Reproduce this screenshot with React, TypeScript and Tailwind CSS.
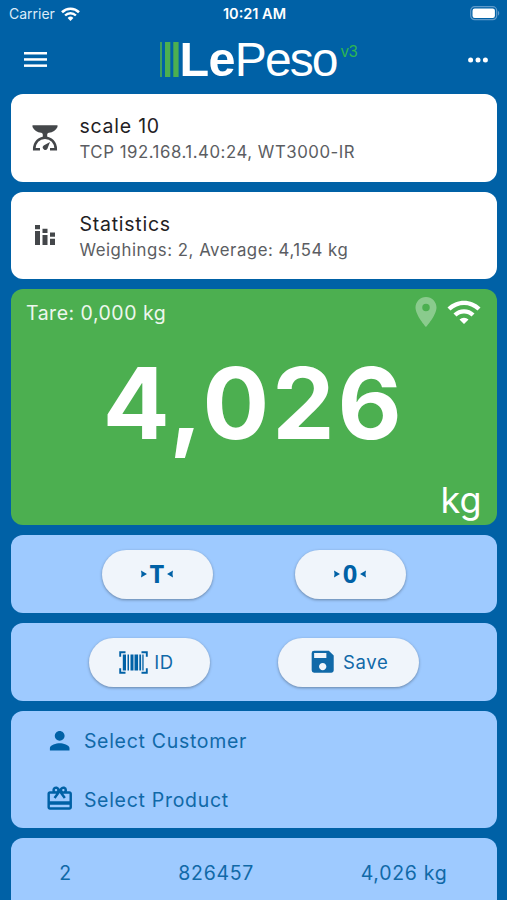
import React from "react";
import {
  MdCardGiftcard,
  MdLocationOn,
  MdPerson,
  MdSave,
  MdWifi,
} from "react-icons/md";

interface InfoCardProps {
  icon: React.ReactNode;
  title: string;
  subtitle: string;
}

const weighings = [{ id: 2, code: "826457", weight: "4,026 kg" }];

export default function App() {
  return (
    <div className="flex h-[900px] w-full flex-col overflow-hidden bg-[#0061a6] font-['Inter',sans-serif]">
      <StatusBar />
      <Header />

      <main className="flex shrink-0 flex-col gap-[10px] px-[10.5px]">
        <InfoCard
          icon={<ScaleIcon />}
          title="scale 10"
          subtitle="TCP 192.168.1.40:24, WT3000-IR"
        />
        <InfoCard
          icon={<StatsIcon />}
          title="Statistics"
          subtitle="Weighings: 2, Average: 4,154 kg"
        />

        <WeightDisplay />

        {/* ------------------ ACTIONS ------------------ */}
        <div className="grid h-[78px] grid-cols-2 items-center justify-items-center rounded-xl bg-[#9ecaff] px-[50px]">
          <ActionButton className="w-[111px]">
            <PresetIcon label="T" />
          </ActionButton>
          <ActionButton className="w-[111px]">
            <PresetIcon label="0" />
          </ActionButton>
        </div>

        <div className="flex h-[78px] items-center justify-between rounded-xl bg-[#9ecaff] px-[78px]">
          <ActionButton className="w-[121px] gap-[6px] pr-[5px]">
            <BarcodeIcon />
            <span className="pt-[2px]">ID</span>
          </ActionButton>
          <ActionButton className="w-[141px] gap-[6px]">
            <MdSave size={29.4} />
            <span className="pt-[2px]">Save</span>
          </ActionButton>
        </div>

        {/* ------------------ SELECTION ------------------ */}
        <div className="flex h-[117px] flex-col rounded-xl bg-[#9ecaff] pl-[34px] text-[19.5px] tracking-[0.7px] text-[#1069a8]">
          <button className="flex h-[59px] items-center gap-[10px]">
            <MdPerson size={29.4} className="text-[#0061a6]" />
            <span className="pt-[2px]">Select Customer</span>
          </button>
          <button className="flex h-[58px] items-center gap-[10px]">
            <MdCardGiftcard size={29.4} className="text-[#0061a6]" />
            <span className="pt-[3px]">Select Product</span>
          </button>
        </div>

        {/* ------------------ HISTORY ------------------ */}
        <div className="h-[120px] rounded-xl bg-[#9ecaff] text-[19.5px] tracking-[0.7px] text-[#1069a8]">
          {weighings.map((w) => (
            <div key={w.id} className="flex h-[72px] items-center">
              <span className="w-[111px] text-center">{w.id}</span>
              <span className="w-[192px] text-center">{w.code}</span>
              <span className="w-[186px] text-center">{w.weight}</span>
            </div>
          ))}
        </div>
      </main>
    </div>
  );
}

// ------------------ STATUS BAR ------------------
function StatusBar() {
  return (
    <div className="grid h-[27px] shrink-0 grid-cols-3 items-center pl-[9px] pr-[7px] text-[14px] text-white">
      <div className="flex items-center gap-[6px]">
        <span className="text-[#dcebf8]">Carrier</span>
        <svg width="19" height="14" viewBox="0 0 19 14" fill="none">
          <path d="M1 5.2a12.2 12.2 0 0 1 17 0" stroke="white" strokeWidth="2.6" />
          <path d="M4.1 8.5a7.6 7.6 0 0 1 10.8 0" stroke="white" strokeWidth="2.4" />
          <path d="M6.6 11a4.2 4.2 0 0 1 5.8 0L9.5 13.9z" fill="white" />
        </svg>
      </div>
      <span className="text-center text-[14.5px] font-semibold">10:21 AM</span>
      <svg className="justify-self-end" width="30" height="15" viewBox="0 0 30 15">
        <rect x="0.7" y="0.7" width="26" height="13" rx="4" fill="none" stroke="#5f9aca" strokeWidth="1.2" />
        <rect x="2.5" y="2.5" width="22.4" height="9.4" rx="2.2" fill="white" />
        <path d="M28 5c1.6.5 1.6 4 0 4.5z" fill="#5f9aca" />
      </svg>
    </div>
  );
}

// ------------------ HEADER ------------------
function Header() {
  return (
    <header className="flex h-[67px] shrink-0 items-center justify-between pb-[2px] pl-[24px] pr-[19px]">
      <button>
        <svg width="23" height="17" viewBox="0 0 23 17" fill="white">
          <rect y="1" width="23" height="2.5" />
          <rect y="7.2" width="23" height="2.5" />
          <rect y="13.4" width="23" height="2.5" />
        </svg>
      </button>
      <div className="flex h-[35px] items-center pl-[3px] font-['Liberation_Sans',sans-serif] text-white">
        <svg width="19" height="35" viewBox="0 0 19 35" fill="#4caf50">
          <rect x="0.2" width="1.6" height="35" />
          <rect x="5" width="5.3" height="35" />
          <rect x="13.3" width="5.3" height="35" />
        </svg>
        <span className="text-[48.5px] leading-[35px] font-bold tracking-[-0.6px]">Le</span>
        <span className="text-[48px] leading-[35px] tracking-[-1.9px]">Peso</span>
        <span className="ml-[4px] self-start pt-[2px] text-[16px] leading-[16px] text-[#2db552]">
          v3
        </span>
      </div>
      <button>
        <svg width="20" height="6" viewBox="0 0 20 6" fill="white">
          <circle cx="2.6" cy="3" r="2.5" />
          <circle cx="10" cy="3" r="2.5" />
          <circle cx="17.4" cy="3" r="2.5" />
        </svg>
      </button>
    </header>
  );
}

// ------------------ CARDS ------------------
function InfoCard({ icon, title, subtitle }: InfoCardProps) {
  return (
    <section className="flex h-[87.5px] items-center rounded-xl bg-white">
      <div className="flex w-[69px] justify-center">{icon}</div>
      <div className="pt-[3px]">
        <h2 className="text-[19.5px] leading-[27px] tracking-[0.75px] text-[#1f2124]">{title}</h2>
        <p className="text-[16.8px] leading-[25px] tracking-[0.53px] text-[#5b5d62]">{subtitle}</p>
      </div>
    </section>
  );
}

function WeightDisplay() {
  return (
    <section className="flex h-[236px] flex-col rounded-xl bg-[#4caf50] pl-[15.5px] pr-[15px] text-white">
      <div className="flex h-[46px] shrink-0 items-center justify-between">
        <span className="pt-[3px] text-[19.5px] tracking-[0.5px] text-[#edf7ed]">
          Tare: 0,000 kg
        </span>
        <div className="flex items-center gap-[2px]">
          <MdLocationOn size={36} className="opacity-35" />
          <MdWifi size={36} />
        </div>
      </div>
      <div className="flex h-[137px] shrink-0 items-center justify-center text-[99px] leading-none font-bold tracking-[3px]">
        4,026
      </div>
      <div className="text-right text-[36px] leading-[57px]">kg</div>
    </section>
  );
}

// ------------------ BUTTONS ------------------
function ActionButton({
  className,
  children,
}: {
  className: string;
  children: React.ReactNode;
}) {
  return (
    <button
      className={`flex h-[49px] items-center justify-center rounded-full bg-[#f0f5fb] text-[18.5px] tracking-[0.7px] text-[#1069a8] shadow-[0_1px_3px_rgba(0,0,0,0.35)] ${className}`}
    >
      {children}
    </button>
  );
}

// Tare and zero symbols: a glyph between two inward arrow heads
function PresetIcon({ label }: { label: string }) {
  return (
    <span className="flex items-center gap-[3px] text-[#0061a6]">
      <svg width="6" height="8" viewBox="0 0 6 8" fill="currentColor">
        <path d="M0 0.5L6 4 0 7.5 0.5 4z" />
      </svg>
      <span className="font-['Open_Sans',sans-serif] text-[25.5px] leading-none font-bold tracking-normal">
        {label}
      </span>
      <svg width="6" height="8" viewBox="0 0 6 8" fill="currentColor">
        <path d="M6 0.5L0 4l6 3.5L5.5 4z" />
      </svg>
    </span>
  );
}

// ------------------ ICONS ------------------
function ScaleIcon() {
  return (
    <svg width="26" height="26" viewBox="0 0 26 26" fill="#44474a">
      <path d="M0.5 0.3h25v1.6c-1.6 3.4-4.8 5.3-8.6 5.9-1.2.3-1.7.9-1.7 2v3h-4.4v-3c0-1.1-.5-1.7-1.7-2C5.3 7.2 2.1 5.3.5 1.9z" />
      <path
        d="M8 24.3H2.2C2.2 17.3 7 12.7 13 12.7s10.8 4.6 10.8 11.6H18"
        fill="none"
        stroke="#44474a"
        strokeWidth="2.5"
      />
      <path d="M18 17l-2.6 6.7a2.5 2.5 0 1 1-3.7-3.3z" />
    </svg>
  );
}

function StatsIcon() {
  return (
    <svg width="20" height="20" viewBox="0 0 20 20" fill="#44474a">
      <path d="M0 0h5v4.3H0zM0 6h5v14H0z" />
      <path d="M7.5 3.8h5v4.3h-5zM7.5 10h5v10h-5z" />
      <path d="M15 7.5h5v4.3h-5zM15 13.7h5V20h-5z" />
    </svg>
  );
}

function BarcodeIcon() {
  return (
    <svg width="29" height="23" viewBox="0 0 29 23" fill="#0061a6">
      <path
        d="M6.5 1.2H1.2v4.6M22.5 1.2h5.3v4.6M6.5 21.8H1.2v-4.6M22.5 21.8h5.3v-4.6"
        fill="none"
        stroke="#0061a6"
        strokeWidth="1.9"
      />
      <rect x="3.8" y="3.5" width="3.2" height="16" />
      <rect x="8.5" y="3.5" width="1.5" height="16" />
      <rect x="11.5" y="3.5" width="3" height="16" />
      <rect x="15.5" y="3.5" width="3.6" height="16" />
      <rect x="20.3" y="3.5" width="1.8" height="16" />
      <rect x="23.3" y="3.5" width="1.3" height="16" />
    </svg>
  );
}
